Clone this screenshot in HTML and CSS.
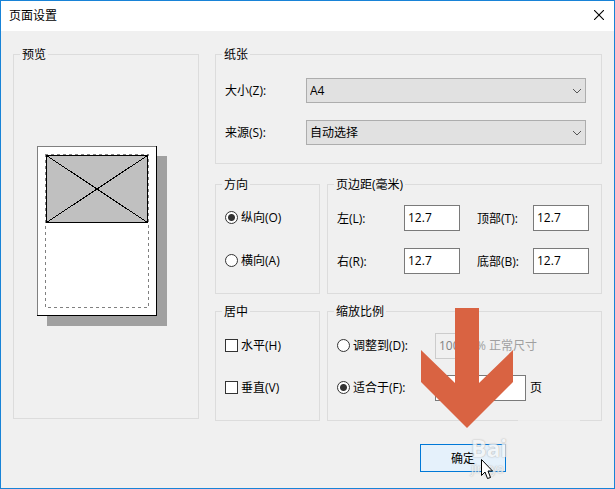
FILE: index.html
```
<!DOCTYPE html>
<html lang="zh-CN">
<head>
    <meta charset="UTF-8">
    <meta name="viewport" content="width=device-width, initial-scale=1.0">
    <title>页面设置</title>
    <link rel="stylesheet" href="styles.css">
</head>
<body>
    <form class="dialog">
        <header class="titlebar">
            <h1>页面设置</h1>
            <button type="button" class="close" aria-label="关闭">
                <svg width="10" height="10" viewBox="0 0 10 10"><path d="M0 0L10 10M10 0L0 10" stroke="#000" stroke-width="1.1"/></svg>
            </button>
        </header>
        <div class="content">
            <fieldset class="preview">
                <legend>预览</legend>
                <svg class="sheet" width="130" height="180" viewBox="0 0 130 180" shape-rendering="crispEdges">
                    <path d="M10 10H130V180H10Z" fill="#a0a0a0"/>
                    <path d="M0 0H120V170H0Z" fill="#fff"/>
                    <path d="M0.5 170V0.5H119" fill="none" stroke="#808080"/>
                    <path d="M0 169.500H119.500V0" fill="none" stroke="#000"/>
                    <path d="M9 9H111V76H9Z" fill="#c0c0c0"/>
                    <path d="M9.500 9.500H110.500V76.500H9.500ZL110.500 76.500M110.500 9.500L9.500 76.500" fill="none" stroke="#000"/>
                    <path d="M8.500 8V161.500H111.500V8M8 8.500H112" fill="none" stroke="#808080" stroke-dasharray="3 3"/>
                </svg>
            </fieldset>
            <div class="groups">
                <fieldset class="paper">
                    <legend>纸张</legend>
                    <div class="row">
                        <label for="size">大小(Z):</label>
                        <select id="size"><option>A4</option></select>
                    </div>
                    <div class="row">
                        <label for="source">来源(S):</label>
                        <select id="source"><option>自动选择</option></select>
                    </div>
                </fieldset>
                <fieldset class="orientation">
                    <legend>方向</legend>
                    <div class="row">
                        <label class="option"><input type="radio" name="orientation" checked>纵向(O)</label>
                    </div>
                    <div class="row">
                        <label class="option"><input type="radio" name="orientation">横向(A)</label>
                    </div>
                </fieldset>
                <fieldset class="margins">
                    <legend>页边距(毫米)</legend>
                    <div class="row">
                        <label for="left">左(L):</label>
                        <input type="text" id="left" value="12.7">
                        <label for="top">顶部(T):</label>
                        <input type="text" id="top" value="12.7">
                    </div>
                    <div class="row">
                        <label for="right">右(R):</label>
                        <input type="text" id="right" value="12.7">
                        <label for="bottom">底部(B):</label>
                        <input type="text" id="bottom" value="12.7">
                    </div>
                </fieldset>
                <fieldset class="center">
                    <legend>居中</legend>
                    <div class="row">
                        <label class="option"><input type="checkbox">水平(H)</label>
                    </div>
                    <div class="row">
                        <label class="option"><input type="checkbox">垂直(V)</label>
                    </div>
                </fieldset>
                <fieldset class="scaling">
                    <legend>缩放比例</legend>
                    <div class="row">
                        <label class="option"><input type="radio" name="scaling">调整到(D):</label>
                        <input type="text" class="percent" value="100" aria-label="缩放百分比" disabled>
                        <span class="muted">% 正常尺寸</span>
                    </div>
                    <div class="row">
                        <label class="option"><input type="radio" name="scaling" checked>适合于(F):</label>
                        <input type="text" class="pages" aria-label="页数">
                        <span>页</span>
                    </div>
                </fieldset>
            </div>
        </div>
        <footer class="actions">
            <div class="confirm">
                <button type="submit" class="ok">确定</button>
                <svg class="arrow" width="92" height="120" viewBox="0 0 92 120"><path d="M34 0H58V75L92 42V74L46 120L0 74V42L34 75Z" fill="#d96342"/></svg>
                <div class="watermark"><b>Bai</b><span>jingya</span></div>
                <svg class="cursor" width="13" height="21" viewBox="0 0 13 21"><path d="M.5 .5V16.500L4 13L6.500 19.500L9.500 18.500L7 12H11.500Z" fill="#fff" stroke="#000"/></svg>
            </div>
        </footer>
    </form>
</body>
</html>
```
FILE: styles.css
```
* {
    box-sizing: border-box;
}
body {
    margin: 0;
    font-family: "Open Sans", "Noto Sans CJK SC", sans-serif;
    font-size: 12px;
    line-height: 17px;
    color: #000;
}
.dialog {
    min-height: 100vh;
    background: #f0f0f0;
    border: 1px solid #1883d7;
}
.titlebar {
    display: flex;
    align-items: center;
    justify-content: space-between;
    height: 30px;
    padding: 0 10px 2px 8px;
    background: #fff;
}
h1 {
    margin: 0;
    font-size: 12px;
    font-weight: 400;
}
button, input, select {
    font: inherit;
    color: inherit;
}
.close {
    display: flex;
    padding: 0;
    border: none;
    background: none;
}
.content {
    display: grid;
    grid-template-columns: minmax(0, 186fr) minmax(0, 387fr);
    column-gap: 16px;
    padding: 15px 12px 0;
}
fieldset {
    min-width: 0;
    margin: 0;
    padding: 12px 9px 2px;
    border: 1px solid #dcdcdc;
}
legend {
    height: 17px;
    margin-left: -3px;
    padding: 0 2px;
}
.preview {
    margin-bottom: 2px;
}
.sheet {
    display: block;
    margin: 71px 0 0 14px;
}
.groups {
    display: grid;
    grid-template-columns: minmax(0, 105fr) minmax(0, 275fr);
    column-gap: 7px;
}
.row {
    display: flex;
    align-items: center;
    height: 26px;
    margin-bottom: 16px;
    white-space: nowrap;
}
.paper {
    grid-column: 1 / 3;
    padding: 15px 15px 1px 9px;
    margin-bottom: 12px;
}
.paper .row {
    height: 25px;
    margin-bottom: 17px;
}
.paper label {
    width: 81px;
}
select {
    flex: 1;
    height: 25px;
    padding: 0 3px 1px;
    border: 1px solid #adadad;
    border-radius: 0;
    appearance: none;
    background: #e1e1e1 url("data:image/svg+xml,%3Csvg xmlns='http://www.w3.org/2000/svg' width='10' height='6'%3E%3Cpath d='M1 1l4 4 4-4' fill='none' stroke='%23555'/%3E%3C/svg%3E") no-repeat right 3px center;
}
.orientation, .margins {
    margin-bottom: 9px;
}
.orientation .row, .margins .row {
    margin-bottom: 17px;
}
.center, .scaling {
    padding-top: 13px;
    padding-bottom: 3px;
}
input {
    margin: 0;
}
input[type="text"] {
    width: 56px;
    height: 26px;
    padding: 0 3px 2px;
    border: 1px solid #7a7a7a;
    border-radius: 0;
    background: #fff;
}
input[type="radio"], input[type="checkbox"] {
    width: 13px;
    height: 13px;
    margin-right: 3px;
    border: 1px solid #333;
    appearance: none;
    background: #fff;
}
input[type="radio"] {
    border-radius: 50%;
}
input[type="radio"]:checked {
    background: radial-gradient(circle, #333 3px, #fff 4px);
}
.margins label {
    width: 67px;
}
.margins label + input + label {
    width: 56px;
    margin-left: 17px;
}
.option {
    display: flex;
    align-items: center;
    align-self: flex-start;
    width: 98px;
    height: 25px;
}
.scaling span {
    padding-bottom: 1px;
}
input.percent {
    width: 38px;
    margin-right: 3px;
    border-color: #ccc;
    background: #f0f0f0;
    color: #838383;
}
.scaling .muted {
    color: #a0a0a0;
}
input.pages {
    width: 91px;
    margin-right: 4px;
}
.actions {
    display: flex;
    justify-content: flex-end;
    padding: 23px 108px 16px 12px;
}
.confirm {
    position: relative;
}
.ok {
    display: block;
    width: 86px;
    height: 28px;
    padding: 0;
    border: 1px solid #0078d7;
    background: #e5f1fb;
}
/* pointer graphics lie over the dialog */
.arrow {
    position: absolute;
    left: 1px;
    bottom: 44px;
}
.watermark {
    position: absolute;
    left: 51px;
    top: -8px;
    color: #f4f6f8;
    opacity: 0.8;
    text-shadow: 0 0 1px #aaa, 0 0 2px #bbb;
    pointer-events: none;
}
.watermark b, .watermark span {
    display: block;
}
.watermark b {
    font-size: 23px;
    line-height: 24px;
}
.watermark::after {
    content: "";
    position: absolute;
    left: 47px;
    top: -18px;
    width: 62px;
    height: 4px;
    background: #f0f0f0;
}
.cursor {
    position: absolute;
    left: 61px;
    top: 15px;
}
```
